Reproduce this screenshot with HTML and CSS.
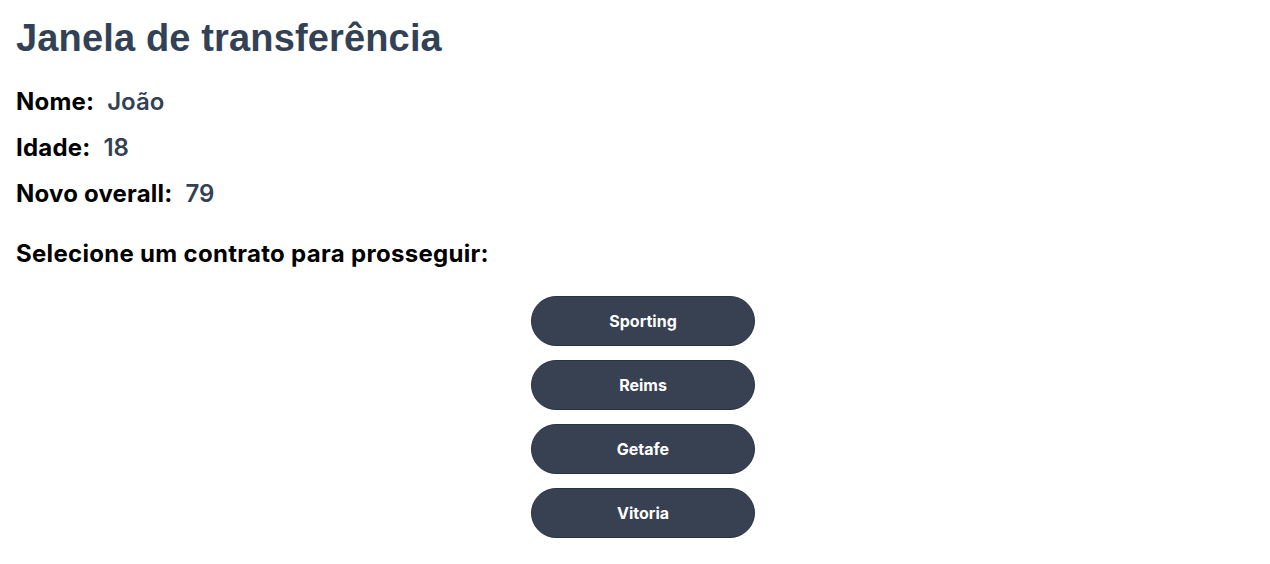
FILE: index.html
```html
<!DOCTYPE html>
<html lang="pt">
<head>
<meta charset="utf-8">
<title>Janela de transferência</title>
<link rel="stylesheet" href="styles.css">
</head>
<body>
<main class="page">
  <h1 class="title">Janela de transferência</h1>
  <p class="info"><span class="label">Nome:</span> <span class="value">João</span></p>
  <p class="info"><span class="label">Idade:</span> <span class="value">18</span></p>
  <p class="info"><span class="label">Novo overall:</span> <span class="value">79</span></p>
  <p class="prompt">Selecione um contrato para prosseguir:</p>
  <div class="options">
    <button class="option">Sporting</button>
    <button class="option">Reims</button>
    <button class="option">Getafe</button>
    <button class="option">Vitoria</button>
  </div>
</main>
</body>
</html>
```
FILE: styles.css
```css
html, body {
  margin: 0;
  padding: 0;
  background: #ffffff;
}
.page {
  padding: 13px 0 0 16px;
  font-family: Inter, "Noto Sans", sans-serif;
}
.title {
  font-family: "Liberation Sans", Arial, sans-serif;
  font-weight: 700;
  font-size: 38px;
  letter-spacing: 0.15px;
  color: #334155;
  margin: 0 0 23px 0;
  line-height: 50px;
}
.info {
  margin: 0 0 14px 0;
  font-size: 24px;
  line-height: 32px;
  letter-spacing: 0.2px;
}
.label {
  font-weight: 700;
  color: #000000;
  margin-right: 6px;
}
.value {
  font-weight: 600;
  color: #334155;
  letter-spacing: 0;
}
.prompt {
  margin: 28px 0 26px 0;
  font-size: 24px;
  line-height: 32px;
  letter-spacing: 0.3px;
  font-weight: 700;
  color: #000000;
}
.options {
  display: flex;
  flex-direction: column;
  align-items: center;
  gap: 14px;
}
.option {
  width: 224px;
  height: 50px;
  border-radius: 25px;
  background: #374151;
  border: 1px solid #2b3444;
  color: #ffffff;
  font-family: Inter, "Noto Sans", sans-serif;
  font-weight: 700;
  font-size: 16px;
  cursor: pointer;
}
```
